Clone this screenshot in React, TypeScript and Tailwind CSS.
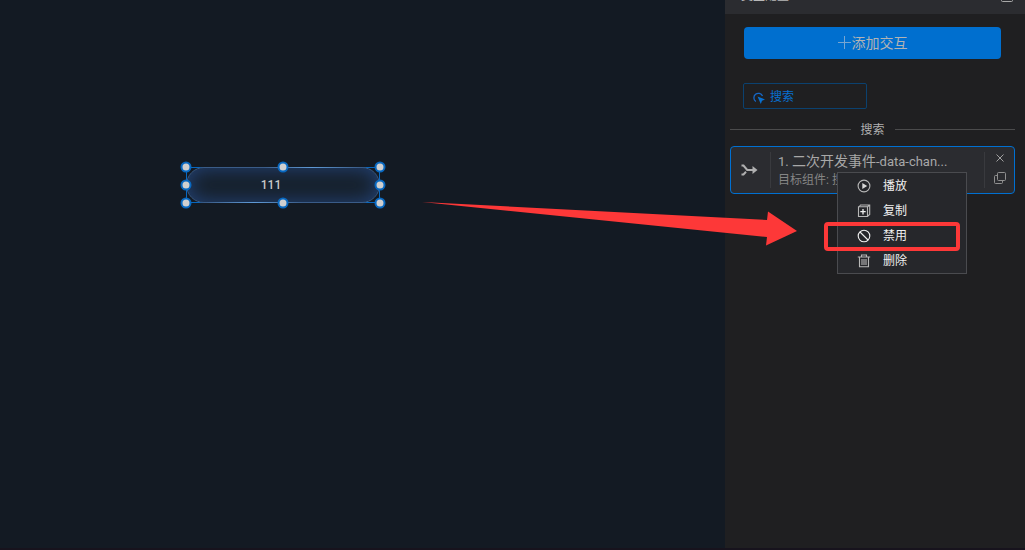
import { useState } from "react";

const menuItems = [
  { key: "play", label: "播放" },
  { key: "copy", label: "复制" },
  { key: "disable", label: "禁用" },
  { key: "delete", label: "删除" },
];

const handles = [
  "left-0 top-0",
  "left-1/2 top-0",
  "left-full top-0",
  "left-0 top-1/2",
  "left-full top-1/2",
  "left-0 top-full",
  "left-1/2 top-full",
  "left-full top-full",
];

function MenuIcon({ name }: { name: string }) {
  return (
    <svg
      viewBox="0 0 14 14"
      className="size-[14px] shrink-0"
      fill="none"
      stroke={name === "disable" ? "#f0f0f0" : "#b8b8b8"}
      strokeWidth="1.1"
    >
      {name === "play" && (
        <>
          <circle cx="7" cy="7" r="5.9" />
          <path d="M5.3 4 10.200 7l-4.900 3z" fill="#d8d8d8" stroke="none" />
        </>
      )}
      {name === "copy" && (
        <>
          <path d="M1.500 2.800h9v9.700h-9z" />
          <path d="M2.200 2.800 3.500 1h9.200v9.500l-2.200 1.800M10.500 2.800 12.700 1" />
          <path d="M6 5v5.400M3.300 7.700h5.400" stroke="#f0f0f0" strokeWidth="1.3" />
        </>
      )}
      {name === "disable" && (
        <>
          <circle cx="7" cy="7" r="5.8" />
          <path d="m3 3 8 8" />
        </>
      )}
      {name === "delete" && (
        <path d="M.8 3h12.400M4.500 3V1h5v2M2.500 3v9.700h9V3M5 5v6M7 5v6M9 5v6" />
      )}
    </svg>
  );
}

function ContextMenu() {
  return (
    <div className="absolute left-[106px] top-[25px] z-10 w-[130px] border border-[#4a4b4f] bg-[#26272b]">
      {menuItems.map((item) => (
        <button
          key={item.key}
          className="flex h-[25px] w-full items-center gap-3 pl-[19px] text-xs text-[#f0f0f0] hover:bg-[#33353a]"
        >
          <MenuIcon name={item.key} />
          {item.label}
        </button>
      ))}
      {/* highlight around the disable entry */}
      <div className="pointer-events-none absolute -left-[14px] top-[49px] h-[29px] w-[136px] rounded border-4 border-[#fd3838]" />
    </div>
  );
}

function InteractionCard() {
  return (
    <div className="relative mt-2 flex h-[48px] items-center rounded border border-[#0070d2] bg-[#2b2c30]">
      <div className="flex h-9 w-10 shrink-0 items-center justify-center border-r border-[#393a3e] pr-0.5">
        <svg viewBox="0 0 17 12" className="h-3 w-[17px]" fill="none" stroke="#b0b0b0" strokeWidth="2">
          <path d="M.5 1.500h2L6.200 6H14M.5 10.500h2L5 7.800" />
          <path d="M11.500 2 16.500 6l-5 4z" fill="#b0b0b0" stroke="none" />
        </svg>
      </div>
      <div className="min-w-0 flex-1 pl-[7px]">
        <div className="truncate text-sm leading-[18px] text-[#a8a8a8]">
          <span className="text-[13px]">1. </span>二次开发事件
          <span className="text-[13px]">-data-chan...</span>
        </div>
        <div className="truncate text-xs leading-[18px] text-[#858585]">目标组件: 搜索</div>
      </div>
      <div className="flex h-9 w-[30px] shrink-0 flex-col items-center justify-between border-l border-[#393a3e]">
        <button aria-label="关闭" className="flex h-3 items-center">
          <svg viewBox="0 0 8 8" className="size-2" stroke="#a0a0a0">
            <path d="m.5.5 7 7m0-7-7 7" />
          </svg>
        </button>
        <button aria-label="复制" className="flex h-5 items-center">
          <svg viewBox="0 0 12 12" className="size-3" fill="none" stroke="#909090">
            <rect x="3.5" y=".5" width="8" height="8" rx="1" />
            <path d="M3 3.500H1.500a1 1 0 0 0-1 1v6a1 1 0 0 0 1 1h6a1 1 0 0 0 1-1V9" />
          </svg>
        </button>
      </div>
      <ContextMenu />
    </div>
  );
}

function SidePanel() {
  return (
    <aside className="w-[300px] shrink-0 bg-[#1f1f21]">
      <header className="flex h-[14px] items-start justify-between overflow-hidden bg-[#2b2c30] pl-4 pr-3">
        <h2 className="-mt-[11px] text-xs leading-[14px] text-[#b8b8b8]">交互配置</h2>
        <svg viewBox="0 0 12 12" className="-mt-[10px] size-3" fill="none" stroke="#a8a8a8">
          <rect x=".5" y=".5" width="11" height="11" rx="1" />
        </svg>
      </header>
      <div className="pl-[19px] pr-6 pt-[13px]">
        <button className="flex h-8 w-full items-center justify-center rounded bg-[#006fcf] text-sm text-[#b3b3b3]">
          <svg viewBox="0 0 14 14" className="size-[14px]" stroke="#77a5d1">
            <path d="M6.500 0v13M0 6.500h13" />
          </svg>
          添加交互
        </button>
      </div>
      <div className="px-[18px] pt-6">
        <button className="flex h-[26px] w-[124px] items-center gap-[5px] rounded-xs border border-[#0b416f] pl-[9px] pt-px text-xs text-[#0870d0]">
          <svg viewBox="0 0 12 12" className="mt-0.5 size-3" fill="none" stroke="#1668c8" strokeWidth="1.3">
            <path d="M2.800 9.500A4.500 4.500 0 1 1 9.500 4" />
            <path d="m4.500 4.500 7.500 3-3 1.200L7.800 12z" fill="#0870d0" stroke="none" />
          </svg>
          搜索
        </button>
      </div>
      <div className="flex flex-col pl-[5px] pr-[10px] pt-[11px]">
        <div className="flex h-[18px] items-center gap-[10px] text-xs text-[#b0b0b0]">
          <span className="h-px flex-1 bg-[#4b4b4c]" />
          <span className="pt-0.5">搜索</span>
          <span className="h-px flex-1 bg-[#4b4b4c]" />
        </div>
        <InteractionCard />
      </div>
    </aside>
  );
}

export default function App() {
  const [value, setValue] = useState("111");

  return (
    <div className="relative flex min-h-screen overflow-hidden border-b-2 border-[#17131d] bg-[#131a23] font-['Roboto','Noto_Sans_CJK_SC',sans-serif]">
      <main className="relative min-w-0 flex-1">
        {/* selected component on the canvas */}
        <div className="absolute left-[186px] top-[167px] h-9 w-[194px] ring-1 ring-inset ring-[#0868c0]">
          <input
            aria-label="搜索内容"
            value={value}
            onChange={(e) => setValue(e.target.value)}
            className="h-full w-full rounded-full border border-[#3a5c88] bg-[#16202b] pr-6 text-center text-xs font-medium text-[#c8c8c8] shadow-[inset_0_0_20px_#24447a] outline-none"
          />
          {/* light running along the rim */}
          <span className="absolute right-5 top-0 h-px w-24 bg-linear-to-r from-transparent via-[#5f9ad6] to-transparent" />
          <span className="absolute bottom-0 left-5 h-px w-24 bg-linear-to-r from-transparent via-[#5f9ad6] to-transparent" />
          {handles.map((pos) => (
            <span
              key={pos}
              className={`absolute size-[11px] -translate-x-1/2 -translate-y-1/2 rounded-full border-2 border-[#0868c0] bg-[#cfcfcf] ${pos}`}
            />
          ))}
        </div>
      </main>
      <SidePanel />
      {/* arrow pointing at the menu entry */}
      <svg
        viewBox="0 0 375 36"
        className="pointer-events-none absolute right-[228px] top-[211px] h-9 w-[375px] overflow-visible"
        fill="#fd3838"
      >
        <path d="M0-9 345 9l1-8.500L375 20 344 34.500l1-8.500z" />
      </svg>
    </div>
  );
}
